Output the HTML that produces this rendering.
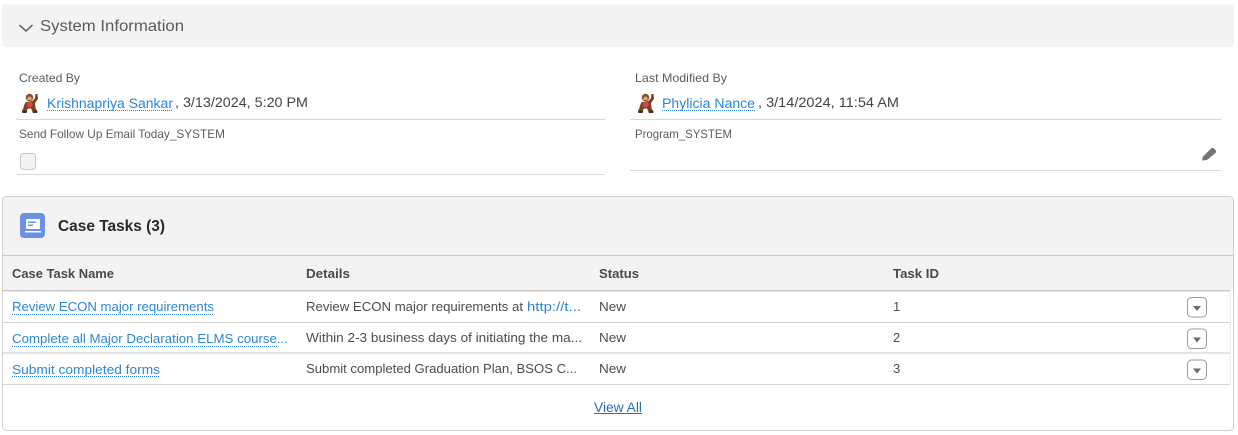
<!DOCTYPE html>
<html lang="en"><head><meta charset="utf-8"><title>System Information</title>
<style>
html,body{margin:0;padding:0;background:#fff;width:1238px;height:435px;overflow:hidden}
svg{display:block}
text{font-family:"Liberation Sans",sans-serif;fill:#444;font-size:13px}
.l{font-size:12px;fill:#5c5c5c}
.a{fill:#2b86d6;font-size:13.5px}
.v{font-size:14px;fill:#444}
.h{font-weight:bold;font-size:13px;fill:#4a4a4a}
.c{font-size:13px;fill:#4c4c4c}
.t{fill:#2b86d6;font-size:13px}
</style></head><body>
<svg width="1238" height="435" viewBox="0 0 1238 435" xmlns="http://www.w3.org/2000/svg">
<defs>
<g id="mk">
<path d="M5 9 Q3 11 2.500 15 L1 17.500 L5 19.500 L7 15.500 L10 15.500 L12 19.500 L16 18 L14.500 15 L14 10 L17 6 L16.500 1 L14.500 1 L14 5 L11.500 8 Z" fill="#7a4526"/>
<circle cx="8.500" cy="4.500" r="3.800" fill="#8a5230"/>
<ellipse cx="8.500" cy="5.500" rx="2.200" ry="1.800" fill="#dcab7c"/>
<rect x="6" y="9" width="5.500" height="5" rx="1" fill="#d8453a"/>
<rect x="1" y="17.500" width="5" height="2.500" rx="1" fill="#4f2d1a"/>
<rect x="11.500" y="17.500" width="5" height="2.500" rx="1" fill="#4f2d1a"/>
</g>
<g id="btn">
<rect x="1187.500" y="0.500" width="19" height="19.500" rx="4" fill="#fff" stroke="#9a9a9a"/>
<path d="M1193 9 H1201 L1197 14Z" fill="#6b6b6b"/>
</g>
</defs>

<rect x="2" y="4" width="1232" height="43" rx="4" fill="#f3f3f3"/>
<path d="M19.500 25 L26 31 L32.500 25" fill="none" stroke="#555" stroke-width="1.400"/>
<text x="40" y="31" textLength="144" lengthAdjust="spacingAndGlyphs" style="font-size:16px;fill:#5a5a5a">System Information</text>

<text class="l" x="19" y="82" textLength="61" lengthAdjust="spacingAndGlyphs">Created By</text>
<use href="#mk" x="21" y="93"/>
<text class="a" x="47" y="108" textLength="126" lengthAdjust="spacingAndGlyphs">Krishnapriya Sankar</text>
<line x1="47" y1="110.500" x2="173" y2="110.500" stroke="#2b86d6" stroke-dasharray="1 1"/>
<text class="v" x="175" y="107" textLength="133" lengthAdjust="spacingAndGlyphs">, 3/13/2024, 5:20 PM</text>
<rect x="16" y="119" width="589" height="1" fill="#d8d8d8"/>
<text class="l" x="19" y="138" textLength="206" lengthAdjust="spacingAndGlyphs">Send Follow Up Email Today_SYSTEM</text>
<rect x="20.500" y="153.500" width="15" height="16" rx="3" fill="#f3f3f3" stroke="#c9c9c9"/>
<rect x="16" y="174" width="589" height="1" fill="#d8d8d8"/>

<text class="l" x="635" y="82" textLength="92" lengthAdjust="spacingAndGlyphs">Last Modified By</text>
<use href="#mk" x="637" y="93"/>
<text class="a" x="662" y="108" textLength="93" lengthAdjust="spacingAndGlyphs">Phylicia Nance</text>
<line x1="662" y1="110.500" x2="755" y2="110.500" stroke="#2b86d6" stroke-dasharray="1 1"/>
<text class="v" x="758" y="107" textLength="141" lengthAdjust="spacingAndGlyphs">, 3/14/2024, 11:54 AM</text>
<rect x="630" y="119" width="591" height="1" fill="#d8d8d8"/>
<text class="l" x="635" y="138" textLength="97" lengthAdjust="spacingAndGlyphs">Program_SYSTEM</text>
<rect x="630" y="170" width="591" height="1" fill="#d8d8d8"/>
<path d="M1202 160.500 L1203 156.500 L1211 148.500 Q1212.500 147.500 1214 148.500 L1215.500 150 Q1216.500 151.500 1215.500 153 L1207 160 Z" fill="#747474"/>

<rect x="2.500" y="196.500" width="1231" height="234" rx="4" fill="#fff" stroke="#cfcfcf"/>
<path d="M3 255 V201 Q3 197 7 197 H1229 Q1233 197 1233 201 V255Z" fill="#f3f3f3"/>
<rect x="3" y="255" width="1230" height="36" fill="#f3f3f3"/>
<rect x="3" y="255" width="1230" height="1" fill="#c9c9c9"/>
<rect x="3" y="290" width="1227" height="1.500" fill="#c9c9c9"/>
<rect x="1230" y="291" width="1" height="94" fill="#efefef"/>

<rect x="20" y="213" width="25" height="25" rx="4" fill="#6b92e3"/>
<rect x="26" y="219" width="14" height="10" rx="1" fill="#fff"/>
<rect x="28" y="221.500" width="8" height="1.500" fill="#6b92e3"/>
<rect x="28" y="224.500" width="5" height="1.500" fill="#6b92e3"/>
<rect x="25" y="231" width="16" height="1.500" fill="#fff"/>
<text x="58" y="231" textLength="107" lengthAdjust="spacingAndGlyphs" style="font-size:15.500px;font-weight:bold;fill:#2a2a2a">Case Tasks (3)</text>

<text class="h" x="12" y="278" textLength="102" lengthAdjust="spacingAndGlyphs">Case Task Name</text>
<text class="h" x="306" y="278" textLength="44" lengthAdjust="spacingAndGlyphs">Details</text>
<text class="h" x="599" y="278" textLength="40" lengthAdjust="spacingAndGlyphs">Status</text>
<text class="h" x="893" y="278" textLength="46" lengthAdjust="spacingAndGlyphs">Task ID</text>

<text class="t" x="12" y="311" textLength="202" lengthAdjust="spacingAndGlyphs">Review ECON major requirements</text>
<line x1="12" y1="314.500" x2="214" y2="314.500" stroke="#2b86d6" stroke-dasharray="1 1"/>
<text class="c" x="306" y="311" textLength="217" lengthAdjust="spacingAndGlyphs">Review ECON major requirements at</text>
<text class="t" x="527" y="311" textLength="54" lengthAdjust="spacingAndGlyphs">http://t...</text>
<text class="c" x="599" y="311" textLength="27" lengthAdjust="spacingAndGlyphs">New</text>
<text class="c" x="893" y="311">1</text>
<use href="#btn" y="297"/>
<rect x="3" y="322" width="1227" height="1" fill="#d4d4d4"/>

<text class="t" x="12" y="343" textLength="276" lengthAdjust="spacingAndGlyphs">Complete all Major Declaration ELMS course...</text>
<line x1="12" y1="346.500" x2="277" y2="346.500" stroke="#2b86d6" stroke-dasharray="1 1"/>
<text class="c" x="306" y="342" textLength="276" lengthAdjust="spacingAndGlyphs">Within 2-3 business days of initiating the ma...</text>
<text class="c" x="599" y="342" textLength="27" lengthAdjust="spacingAndGlyphs">New</text>
<text class="c" x="893" y="342">2</text>
<use href="#btn" y="328.500"/>
<rect x="3" y="352" width="1227" height="2" fill="#e4e4e4"/>

<text class="t" x="12" y="374" textLength="148" lengthAdjust="spacingAndGlyphs">Submit completed forms</text>
<line x1="12" y1="376.500" x2="160" y2="376.500" stroke="#2b86d6" stroke-dasharray="1 1"/>
<text class="c" x="306" y="373" textLength="271" lengthAdjust="spacingAndGlyphs">Submit completed Graduation Plan, BSOS C...</text>
<text class="c" x="599" y="373" textLength="27" lengthAdjust="spacingAndGlyphs">New</text>
<text class="c" x="893" y="373">3</text>
<use href="#btn" y="359.500"/>
<rect x="3" y="384" width="1227" height="1" fill="#d4d4d4"/>

<text x="594" y="412" textLength="48" lengthAdjust="spacingAndGlyphs" style="font-size:13.500px;fill:#2a6cb0">View All</text>
<line x1="594" y1="413.500" x2="642" y2="413.500" stroke="#2a6cb0"/>
</svg>
</body></html>
